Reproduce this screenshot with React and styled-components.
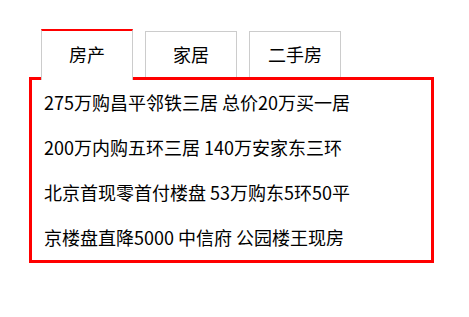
import React, { useState } from "react";
import styled, { createGlobalStyle } from "styled-components";

const GlobalStyle = createGlobalStyle`
  html, body {
    margin: 0;
    padding: 0;
    background: #fff;
  }
  body {
    font-family: "Noto Sans CJK SC", "Microsoft YaHei", sans-serif;
    color: #000;
  }
`;

const Page = styled.div`
  padding: 29px 0 0 29px;
`;

const TabBar = styled.ul`
  display: flex;
  align-items: flex-end;
  gap: 12px;
  margin: 0;
  padding: 0 0 0 12px;
  list-style: none;
`;

const Tab = styled.li`
  box-sizing: border-box;
  width: 92px;
  text-align: center;
  font-size: 18px;
  cursor: pointer;
  background: #fff;
  border: 1px solid #ccc;
  border-bottom: none;
  height: 46px;
  line-height: 45px;

  ${({ $active }) =>
    $active &&
    `
    position: relative;
    z-index: 1;
    border-top: 2px solid #f00;
    height: 51px;
    padding: 1px 0 3px;
    margin-bottom: -3px;
  `}
`;

const Panel = styled.div`
  box-sizing: border-box;
  width: 405px;
  height: 186px;
  border: 3px solid #f00;
`;

const List = styled.ul`
  margin: 0;
  padding: 0 0 0 12px;
  list-style: none;
`;

const Item = styled.li`
  font-size: 18px;
  line-height: 45px;
  height: 45px;
  white-space: nowrap;
`;

const tabs = [
  {
    name: "房产",
    items: [
      "275万购昌平邻铁三居 总价20万买一居",
      "200万内购五环三居 140万安家东三环",
      "北京首现零首付楼盘 53万购东5环50平",
      "京楼盘直降5000 中信府 公园楼王现房",
    ],
  },
  {
    name: "家居",
    items: ["家具", "家居", "家居"],
  },
  {
    name: "二手房",
    items: ["二手房", "二手房", "二手房"],
  },
];

const App = () => {
  const [current, setCurrent] = useState(0);

  return (
    <Page>
      <GlobalStyle />
      <TabBar>
        {tabs.map((tab, i) => (
          <Tab key={tab.name} $active={i === current} onMouseEnter={() => setCurrent(i)}>
            {tab.name}
          </Tab>
        ))}
      </TabBar>
      <Panel>
        <List>
          {tabs[current].items.map((text, i) => (
            <Item key={i}>{text}</Item>
          ))}
        </List>
      </Panel>
    </Page>
  );
};

export default App;
